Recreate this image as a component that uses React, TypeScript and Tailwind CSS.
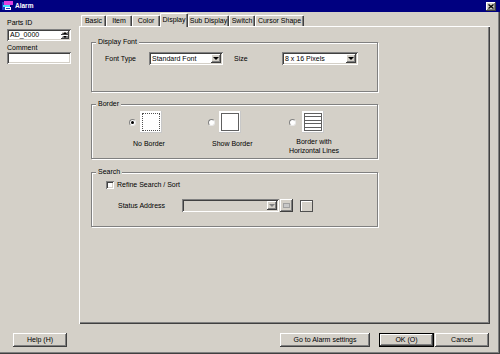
import React from "react";

const raised =
  "bg-[#d4d0c8] shadow-[inset_-1px_-1px_#404040,inset_1px_1px_#ffffff,inset_-2px_-2px_#808080]";
const sunken =
  "shadow-[inset_1px_1px_#808080,inset_-1px_-1px_#ffffff,inset_2px_2px_#404040,inset_-2px_-2px_#d4d0c8]";

const tabs: [string, string][] = [
  ["Basic", "w-[25px]"],
  ["Item", "w-[26px]"],
  ["Color", "w-[28px]"],
  ["Display", "w-[28px]"],
  ["Sub Display", "w-[41px]"],
  ["Switch", "w-[26px]"],
  ["Cursor Shape", "w-[49px]"],
];

function Arrow({ gray }: { gray?: boolean }) {
  return (
    <div
      className={`w-0 h-0 border-l-[3px] border-r-[3px] border-t-[3px] border-l-transparent border-r-transparent ${
        gray ? "border-t-[#808080]" : "border-t-black"
      }`}
    />
  );
}

function Select({ text, className }: { text: string; className: string }) {
  return (
    <div className={`${sunken} bg-white h-[13px] flex items-center pl-[3px] pr-[2px] ${className}`}>
      <span className="flex-1 whitespace-nowrap">{text}</span>
      <div className={`${raised} w-[10px] h-[9px] flex items-center justify-center`}>
        <Arrow />
      </div>
    </div>
  );
}

function Group({
  title,
  className,
  children,
}: {
  title: string;
  className: string;
  children?: React.ReactNode;
}) {
  return (
    <div
      className={`relative w-[287px] border border-[#808080] shadow-[inset_1px_1px_#ffffff,1px_1px_#ffffff] ${className}`}
    >
      <span className="absolute left-[4px] -top-[5px] px-[2px] bg-[#d4d0c8] leading-[8px]">
        {title}
      </span>
      {children}
    </div>
  );
}

function Radio({ checked }: { checked?: boolean }) {
  return (
    <div className="w-[7px] h-[7px] rounded-full bg-white border border-[#808080] border-r-[#e8e8e8] border-b-[#e8e8e8] flex items-center justify-center">
      {checked && <div className="w-[3px] h-[3px] rounded-full bg-black" />}
    </div>
  );
}

export default function App() {
  return (
    <div className="w-[500px] h-[354px] bg-[#d4d0c8] flex flex-col text-[7px] leading-[8px] text-black font-['Liberation_Sans',Arial,sans-serif] shadow-[inset_-1px_-1px_#404040,inset_-2px_-2px_#808080] overflow-hidden">
      {/* title bar */}
      <div className="h-[12px] bg-[#000080] flex items-center pl-[2px] pr-[4px]">
        <svg width="11" height="10" viewBox="0 0 11 10">
          <rect x="0" y="1" width="8" height="8" fill="#2040c0" />
          <rect x="2" y="0" width="9" height="4" fill="#e040e0" />
          <rect x="1" y="4" width="7" height="2" fill="#40e0ff" />
          <rect x="3" y="6" width="6" height="3" fill="#ffffff" />
          <rect x="4" y="7" width="4" height="1" fill="#2040c0" />
        </svg>
        <span className="ml-[2px] text-white font-bold text-[6.5px]">Alarm</span>
        <div className={`${raised} ml-auto w-[10px] h-[9px] flex items-center justify-center`}>
          <svg width="6" height="5" viewBox="0 0 6 5">
            <path d="M0.5 0.5 L5.5 4.5 M5.5 0.5 L0.5 4.5" stroke="black" strokeWidth="1.3" />
          </svg>
        </div>
      </div>

      <div className="flex flex-1">
        {/* left column */}
        <div className="w-[79px] pl-[7px] pr-[8px] pt-[7px] flex flex-col">
          <span>Parts ID</span>
          <div className={`${sunken} bg-white mt-[2px] h-[12px] flex items-center pl-[3px] pr-[2px]`}>
            <span className="flex-1">AD_0000</span>
            <div className="flex flex-col">
              <div className={`${raised} w-[8px] h-[4px] flex items-center justify-center`}>
                <div className="w-0 h-0 border-l-[2px] border-r-[2px] border-b-[2px] border-l-transparent border-r-transparent border-b-black" />
              </div>
              <div className={`${raised} w-[8px] h-[4px] flex items-center justify-center`}>
                <div className="w-0 h-0 border-l-[2px] border-r-[2px] border-t-[2px] border-l-transparent border-r-transparent border-t-black" />
              </div>
            </div>
          </div>
          <span className="mt-[3px]">Comment</span>
          <div className={`${sunken} bg-white h-[12px]`} />
        </div>

        {/* tabs + panel */}
        <div className="w-[411px] flex flex-col">
          <div className="h-[14px] flex items-end pl-[2px]">
            {tabs.map(([label, w]) =>
              label === "Display" ? (
                <div
                  key={label}
                  className={`${w} h-[14px] -mb-[1px] relative z-10 bg-[#d4d0c8] rounded-t-[1px] shadow-[inset_1px_1px_#ffffff,inset_-1px_0_#404040,inset_-2px_0_#808080] flex items-center justify-center whitespace-nowrap`}
                >
                  {label}
                </div>
              ) : (
                <div
                  key={label}
                  className={`${w} h-[11px] rounded-t-[1px] shadow-[inset_1px_1px_#ffffff,inset_-1px_0_#404040,inset_-2px_0_#808080] flex items-center justify-center whitespace-nowrap`}
                >
                  {label}
                </div>
              )
            )}
          </div>

          <div className="h-[298px] shadow-[inset_1px_1px_#ffffff,inset_-1px_-1px_#404040,inset_-2px_-2px_#808080] pl-[12px] pt-[16px] flex flex-col">
            <Group title="Display Font" className="h-[50px]">
              <div className="flex items-center pl-[13px] pt-[9px]">
                <span className="w-[44px]">Font Type</span>
                <Select text="Standard Font" className="w-[74px]" />
                <span className="ml-[11px] w-[48px]">Size</span>
                <Select text="8 x 16 Pixels" className="w-[76px]" />
              </div>
            </Group>

            <Group title="Border" className="h-[55px] mt-[12px]">
              <div className="flex pt-[6px] pl-[37px]">
                <div className="w-[79px] flex flex-col">
                  <div className="flex items-center gap-[4px]">
                    <Radio checked />
                    <div className="w-[22px] h-[22px] bg-white p-[2px] shadow-[inset_-1px_-1px_#c8c8c8]">
                      <div className="w-full h-full border border-dotted border-[#505050]" />
                    </div>
                  </div>
                  <span className="mt-[6px] pl-[4px] leading-[9px]">No Border</span>
                </div>
                <div className="w-[81px] flex flex-col">
                  <div className="flex items-center gap-[4px]">
                    <Radio />
                    <div className="w-[22px] h-[22px] bg-white p-[2px] shadow-[inset_-1px_-1px_#c8c8c8]">
                      <div className="w-full h-full border border-[#606060]" />
                    </div>
                  </div>
                  <span className="mt-[6px] pl-[4px] leading-[9px]">Show Border</span>
                </div>
                <div className="flex flex-col">
                  <div className="flex items-center gap-[6px]">
                    <Radio />
                    <div className="w-[22px] h-[22px] bg-white p-[2px] shadow-[inset_-1px_-1px_#c8c8c8]">
                      <div className="w-full h-full border border-[#606060] flex flex-col divide-y divide-[#606060]">
                        <div className="flex-1" />
                        <div className="flex-1" />
                        <div className="flex-1" />
                        <div className="flex-1" />
                        <div className="flex-1" />
                      </div>
                    </div>
                  </div>
                  <div className="mt-[4px] -ml-[5px] w-[60px] text-center leading-[9px] whitespace-nowrap">
                    Border with
                    <br />
                    Horizontal Lines
                  </div>
                </div>
              </div>
            </Group>

            <Group title="Search" className="h-[55px] mt-[13px]">
              <div className="flex items-center pl-[14px] pt-[8px] gap-[3px]">
                <div className={`${sunken} bg-white w-[8px] h-[8px]`} />
                <span>Refine Search / Sort</span>
              </div>
              <div className="flex items-center pl-[26px] mt-[10px]">
                <span className="w-[64px]">Status Address</span>
                <div className={`${sunken} bg-[#d4d0c8] w-[97px] h-[13px] flex items-center justify-end pr-[2px]`}>
                  <div className={`${raised} w-[10px] h-[9px] flex items-center justify-center`}>
                    <Arrow gray />
                  </div>
                </div>
                <div className={`${raised} ml-[1px] w-[13px] h-[13px] flex items-center justify-center`}>
                  <div className="w-[7px] h-[5px] border border-[#a0a0a0] bg-[#c8c8c8]" />
                </div>
                <div className="ml-[7px] w-[13px] h-[12px] border border-[#505050] shadow-[inset_1px_1px_#ffffff]" />
              </div>
            </Group>
          </div>
        </div>
      </div>

      {/* bottom buttons */}
      <div className="h-[30px] flex items-start pt-[9px] pl-[13px] pr-[11px]">
        <div className={`${raised} w-[54px] h-[14px] flex items-center justify-center`}>Help (H)</div>
        <div className="ml-auto flex">
          <div className={`${raised} w-[90px] h-[14px] flex items-center justify-center`}>
            Go to Alarm settings
          </div>
          <div className="ml-[9px] w-[55px] h-[14px] border border-black">
            <div className={`${raised} w-full h-full flex items-center justify-center`}>OK (O)</div>
          </div>
          <div className={`${raised} ml-[1px] w-[54px] h-[14px] flex items-center justify-center`}>
            Cancel
          </div>
        </div>
      </div>
    </div>
  );
}
